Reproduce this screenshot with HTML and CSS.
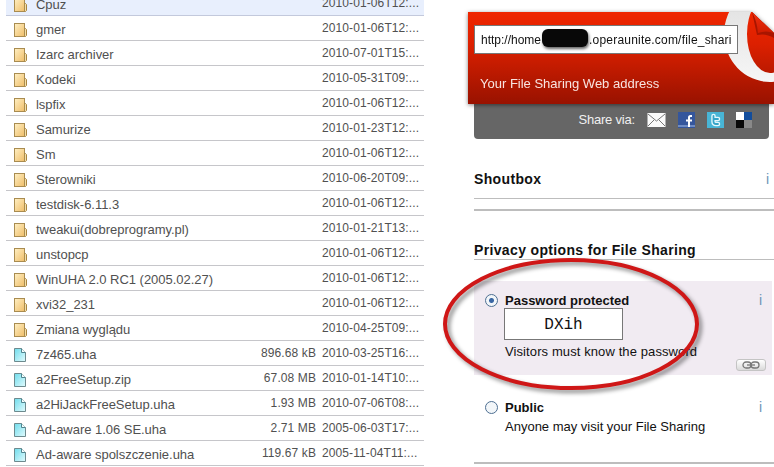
FILE: index.html
```
<!DOCTYPE html>
<html lang="pl">
<head>
    <meta charset="UTF-8">
    <meta name="viewport" content="width=device-width, initial-scale=1.0">
    <title>File Sharing</title>
    <link rel="stylesheet" href="styles.css">
</head>
<body>

    <svg width="0" height="0" class="defs">
        <defs>
            <linearGradient id="folderFill" x1="0" y1="0" x2="1" y2="1">
                <stop offset="0" stop-color="#fff0c4"/>
                <stop offset="1" stop-color="#efbd68"/>
            </linearGradient>
            <linearGradient id="fileFill" x1="0" y1="0" x2="1" y2="1">
                <stop offset="0" stop-color="#6fdcec"/>
                <stop offset="1" stop-color="#e2fbfd"/>
            </linearGradient>
            <symbol id="folder" viewBox="0 0 14 15">
                <path d="M10.5 5.500h1l1 1v6l-1 1h-1z" fill="#f5dfa5" stroke="#a8843f"/>
                <rect x=".5" y=".5" width="10" height="13" fill="url(#folderFill)" stroke="#a98c50"/>
            </symbol>
            <symbol id="file" viewBox="0 0 14 15">
                <path d="M.5.5h7l4 4v9H.5z" fill="url(#fileFill)" stroke="#6d8a8e"/>
                <path d="M7.5.5v4h4" fill="#f4ffff" stroke="#4f858f"/>
            </symbol>
        </defs>
    </svg>

    <div class="page">
        <ul class="files" id="files"></ul>

        <div class="sidebar">
            <div class="address">
                <svg class="paper" width="306" height="92" viewBox="0 0 306 92">
                    <defs>
                        <linearGradient id="red" x1="0" y1="0" x2="0" y2="1">
                            <stop offset="0" stop-color="#ef2600"/>
                            <stop offset=".35" stop-color="#dc2000"/>
                            <stop offset="1" stop-color="#981200"/>
                        </linearGradient>
                        <linearGradient id="logo" x1="0" y1="0" x2="0" y2="1">
                            <stop offset="0" stop-color="#dedede"/>
                            <stop offset="1" stop-color="#f6f6f6"/>
                        </linearGradient>
                        <linearGradient id="flap" x1="0" y1="0" x2="0" y2="1">
                            <stop offset="0" stop-color="#f03010"/>
                            <stop offset="1" stop-color="#d01c00"/>
                        </linearGradient>
                        <clipPath id="sheet"><path d="M0 0h284l22 21v71H0z"/></clipPath>
                    </defs>
                    <path d="M0 0h284l22 21v71H0z" fill="url(#red)"/>
                    <path clip-path="url(#sheet)" fill="url(#logo)" fill-rule="evenodd" d="M256 22a46 48 0 1 0 92 0a46 48 0 1 0-92 0zM279 22a23 39 0 1 0 46 0a23 39 0 1 0-46 0z"/>
                    <path d="M284 0l22 21v5q-8-5-17-3z" fill="#a81500"/>
                    <path d="M284 0q5 9 6 21q8-3 16 0z" fill="url(#flap)"/>
                </svg>
                <div class="address-body">
                    <div class="url"><span>http://home</span><i class="blot"></i><span class="url-end">.operaunite.com/file_shari</span></div>
                    <p>Your File Sharing Web address</p>
                </div>
            </div>
            <div class="share">
                <span>Share via:</span>
                <svg width="19" height="16" viewBox="0 0 19 16">
                    <rect x=".5" y="1" width="18" height="14" fill="#fafafa"/>
                    <path d="M1 14l6-6M18 14l-6-6M1 2l8.500 7L18 2" fill="none" stroke="#777"/>
                </svg>
                <svg width="17" height="16" viewBox="0 0 17 16">
                    <rect width="17" height="16" fill="#35569c"/>
                    <rect y="13" width="17" height="2" fill="#6f8cc4"/>
                    <path d="M14 4h-1.500q-1.500 0-1.500 1.500V15M8 8.500h6" fill="none" stroke="#fff" stroke-width="2"/>
                </svg>
                <svg width="17" height="16" viewBox="0 0 17 16">
                    <rect width="17" height="16" fill="#48b5d6"/>
                    <path d="M6.500 4v5.500q0 2.500 2.500 2.500h2M6.500 7h4.500" fill="none" stroke="#e4f8fd" stroke-width="4.500" stroke-linecap="round"/>
                    <path d="M6.500 4v5.500q0 2.500 2.500 2.500h2M6.500 7h4.500" fill="none" stroke="#35a4c8" stroke-width="1.800" stroke-linecap="round"/>
                </svg>
                <svg width="16" height="16" viewBox="0 0 16 16">
                    <rect width="8" height="8" fill="#fff"/>
                    <rect x="8" width="8" height="8" fill="#124d9c"/>
                    <rect y="8" width="8" height="8" fill="#080808"/>
                    <rect x="8" y="8" width="8" height="8" fill="#898989"/>
                </svg>
            </div>

            <div class="section shoutbox">
                <h2>Shoutbox</h2>
                <span class="info">i</span>
            </div>
            <div class="rule"></div>

            <div class="section privacy">
                <h2>Privacy options for File Sharing</h2>
            </div>

            <div class="option selected">
                <span class="radio on"></span>
                <div class="option-text">
                    <h3>Password protected</h3>
                    <div class="password">DXih</div>
                    <p>Visitors must know the password</p>
                </div>
                <div class="option-side">
                    <span class="info">i</span>
                    <span class="link">
                        <svg width="18" height="8" viewBox="0 0 18 8">
                            <g fill="none" stroke="#777" stroke-width="1.300">
                                <rect x="1" y="1" width="8" height="6" rx="3"/>
                                <rect x="9" y="1" width="8" height="6" rx="3"/>
                                <path d="M5 4h8"/>
                            </g>
                        </svg>
                    </span>
                </div>
            </div>

            <div class="option public">
                <span class="radio"></span>
                <div class="option-text">
                    <h3>Public</h3>
                    <p>Anyone may visit your File Sharing</p>
                </div>
                <div class="option-side">
                    <span class="info">i</span>
                </div>
            </div>
            <div class="rule"></div>
        </div>

        <svg class="marker" width="270" height="146" viewBox="0 0 270 146">
            <ellipse cx="133" cy="70" rx="126" ry="64" fill="none" stroke="#cf1717" stroke-width="4"/>
        </svg>
    </div>

    <script src="files.js"></script>
</body>
</html>
```
FILE: files.js
```
const files = [
    ["Cpuz", "", "2010-01-06T12:..."],
    ["gmer", "", "2010-01-06T12:..."],
    ["Izarc archiver", "", "2010-07-01T15:..."],
    ["Kodeki", "", "2010-05-31T09:..."],
    ["lspfix", "", "2010-01-06T12:..."],
    ["Samurize", "", "2010-01-23T12:..."],
    ["Sm", "", "2010-01-06T12:..."],
    ["Sterowniki", "", "2010-06-20T09:..."],
    ["testdisk-6.11.3", "", "2010-01-06T12:..."],
    ["tweakui(dobreprogramy.pl)", "", "2010-01-21T13:..."],
    ["unstopcp", "", "2010-01-06T12:..."],
    ["WinUHA 2.0 RC1 (2005.02.27)", "", "2010-01-06T12:..."],
    ["xvi32_231", "", "2010-01-06T12:..."],
    ["Zmiana wyglądu", "", "2010-04-25T09:..."],
    ["7z465.uha", "896.68 kB", "2010-03-25T16:..."],
    ["a2FreeSetup.zip", "67.08 MB", "2010-01-14T10:..."],
    ["a2HiJackFreeSetup.uha", "1.93 MB", "2010-07-06T08:..."],
    ["Ad-aware 1.06 SE.uha", "2.71 MB", "2005-06-03T17:..."],
    ["Ad-aware spolszczenie.uha", "119.67 kB", "2005-11-04T11:..."]
];

// no size means the entry is a folder
document.getElementById("files").innerHTML = files.map(([name, size, date]) => `
    <li class="file">
        <svg class="icon" width="14" height="15"><use href="#${size ? "file" : "folder"}"/></svg>
        <span class="name">${name}</span>
        <span class="size">${size}</span>
        <span class="date">${date}</span>
    </li>
`).join("");
```
FILE: styles.css
```
body {
    margin: 0;
    background-color: #fff;
    font-family: "Liberation Sans", Arial, sans-serif;
    font-size: 13px;
    color: #111;
    overflow: hidden;
}

h2, h3, p, ul {
    margin: 0;
    padding: 0;
}

.defs {
    position: absolute;
}

.page {
    position: relative;
    display: flex;
    width: 774px;
    height: 467px;
    overflow: hidden;
}

.files {
    width: 418px;
    margin: -9px 44px 0 6px;
    list-style: none;
    flex-shrink: 0;
}

.file {
    display: flex;
    height: 24px;
    border-bottom: 1px solid #c6c6ca;
    color: #505050;
    white-space: nowrap;
}

.file:first-child {
    background-color: #e8effd;
    border-color: #c3c9dc;
}

.icon {
    margin: 7px 8px 0 8px;
    flex-shrink: 0;
}

.name {
    flex: 1;
    line-height: 28px;
    letter-spacing: -0.03px;
}

.size, .date {
    font-size: 12px;
    line-height: 25px;
    letter-spacing: 0.1px;
}

.date {
    width: 102px;
    margin-left: 6px;
}

.sidebar {
    width: 306px;
    flex-shrink: 0;
}

.address {
    position: relative;
    z-index: 1;
    height: 92px;
    margin-top: 12px;
    filter: drop-shadow(0 1px 2px rgba(0, 0, 0, 0.5));
}

.paper {
    position: absolute;
    left: 0;
    top: 0;
}

.address-body {
    position: relative;
    padding: 13px 0 0 6px;
}

.url {
    display: flex;
    align-items: center;
    width: 256px;
    height: 27px;
    padding-left: 6px;
    border: 1px solid #777;
    background-color: #fff;
    font-size: 12px;
}

.blot {
    width: 46px;
    height: 18px;
    margin: -4px 0 0 1px;
    border-radius: 6px;
    background-color: #080808;
    box-shadow: 1px 2px 3px rgba(0, 0, 0, 0.6);
}

.url-end {
    margin-left: 1px;
    letter-spacing: 0.2px;
}

.address p {
    margin: 21px 0 0 6px;
    line-height: 17px;
    color: #f8e4e0;
}

.share {
    display: flex;
    align-items: center;
    height: 31px;
    width: 278px;
    margin-left: 6px;
    padding: 0 17px 4px 0;
    justify-content: flex-end;
    border-radius: 0 0 4px 4px;
    background-color: #666;
    color: #f0f0f0;
}

.share span {
    margin-right: 12px;
    letter-spacing: -0.2px;
}

.share svg {
    margin-right: 12px;
}

.share svg:last-child {
    margin-right: 0;
}

.section {
    display: flex;
    justify-content: space-between;
    align-items: center;
    margin-left: 6px;
    border-bottom: 1px solid #bdbdbd;
}

.section h2 {
    font-size: 14px;
    letter-spacing: 0.35px;
}

.shoutbox {
    height: 38px;
    margin-top: 21px;
}

.shoutbox .info {
    margin-right: 5px;
}

.rule {
    height: 2px;
    margin: 10px 0 0 6px;
    background-color: #bdbdbd;
}

.privacy {
    height: 18px;
    margin-top: 30px;
}

.info {
    margin-right: -1px;
    color: #6f93b6;
    font-size: 14px;
    line-height: 16px;
}

.option {
    display: flex;
    margin-left: 6px;
    padding: 11px 6px 0 11px;
}

.selected {
    width: 281px;
    height: 83px;
    margin-top: 21px;
    background-color: #f1ebf2;
}

.selected .info {
    margin-right: 4px;
}

.public {
    height: 53px;
    padding-right: 13px;
    padding-top: 24px;
}

.radio {
    width: 11px;
    height: 11px;
    margin: 2px 7px 0 0;
    border: 1px solid #4e6f92;
    border-radius: 50%;
    background-color: #f2f6f9;
}

.on {
    background-image: radial-gradient(circle, #3966a3 0, #3966a3 2px, transparent 3px);
}

.option-text {
    flex: 1;
    white-space: nowrap;
}

.option h3 {
    height: 16px;
    font-size: 13px;
    line-height: 18px;
}

.option p {
    line-height: 22px;
    letter-spacing: 0.1px;
}

.public p {
    line-height: 23px;
    letter-spacing: 0;
}

.password {
    width: 117px;
    height: 30px;
    margin: 0 0 1px -1px;
    border: 1px solid #777;
    background-color: #fff;
    font: 16px/32px "Liberation Mono", monospace;
    text-align: center;
}

.option-side {
    display: flex;
    flex-direction: column;
    align-items: flex-end;
}

.link {
    display: flex;
    align-items: center;
    justify-content: center;
    width: 28px;
    height: 10px;
    margin-top: 51px;
    border: 1px solid #c4c4c4;
    border-radius: 3px;
    background: linear-gradient(#fff, #dadada);
}

/* hand-drawn highlight over the password option */
.marker {
    position: absolute;
    left: 438px;
    top: 254px;
    z-index: 2;
    filter: drop-shadow(3px 3px 2px rgba(0, 0, 0, 0.45));
}
```
